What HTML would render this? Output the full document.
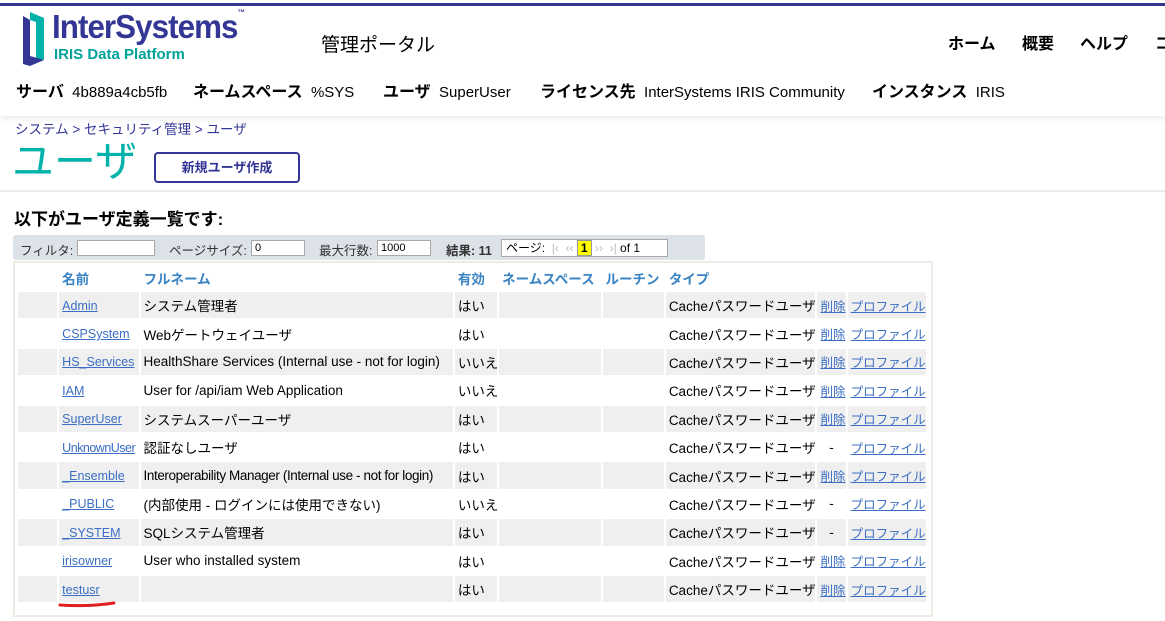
<!DOCTYPE html>
<html><head><meta charset="utf-8"><style>
*{margin:0;padding:0;box-sizing:border-box}
body{width:1165px;height:621px;overflow:hidden;background:#fff;font-family:"Liberation Sans","Noto Sans CJK JP",sans-serif;position:relative;color:#000}
.a{position:absolute;white-space:nowrap}
.b{font-weight:bold}
table{position:absolute;left:16px;top:264px;width:912px;border-collapse:separate;border-spacing:2px;table-layout:fixed;font-size:13.5px}
td,th{height:26.4px;padding:0 3px;background:#efefef;overflow:hidden;white-space:nowrap;text-align:left;vertical-align:middle}
tr.w td{background:#fff}
th{background:#fff;height:24px;color:#3b84c4;font-weight:bold;font-size:13.5px}
a{color:#3b6ec4;text-decoration:underline;font-size:12.5px}
input{position:absolute;height:16px;border:1px solid #aaa;background:#fff;font-size:11px;padding-left:3px;font-family:"Liberation Sans",sans-serif}
</style></head><body>
<div class="a" style="left:0;top:3px;width:1165px;height:3px;background:#333695"></div>
<div class="a" style="left:0;top:6px;width:1165px;height:110px;background:#fff;box-shadow:0 3px 6px rgba(0,0,0,0.08)"></div>
<svg class="a" style="left:22px;top:10px" width="26" height="58" viewBox="0 0 26 58"><polygon points="8,2 22,8 22,50 14,48 14,12 8,10" fill="#00b2a9"/><polygon points="1,6 8,10 8,46 22,50 8,56 1,54" fill="#333695"/></svg>
<div class="a b" style="left:52px;top:8px;font-size:33px;color:#333695;letter-spacing:-1px;transform:scaleX(0.95);transform-origin:left">InterSystems<span style="font-size:8px;vertical-align:top">™</span></div>
<div class="a b" style="left:54px;top:46px;font-size:15px;color:#00a29a">IRIS Data Platform</div>
<div class="a" style="left:321px;top:30px;font-size:19px">管理ポータル</div>
<div class="a b" style="left:948px;top:30px;font-size:16px">ホーム</div>
<div class="a b" style="left:1022px;top:30px;font-size:16px">概要</div>
<div class="a b" style="left:1080px;top:30px;font-size:16px">ヘルプ</div>
<div class="a b" style="left:1155px;top:30px;font-size:16px">コ</div>
<div class="a" style="left:16px;top:78px;font-size:15px"><b style="font-size:16px">サーバ</b>&nbsp; 4b889a4cb5fb</div>
<div class="a" style="left:193px;top:78px;font-size:15px"><b style="font-size:16px">ネームスペース</b>&nbsp; %SYS</div>
<div class="a" style="left:383px;top:78px;font-size:15px"><b style="font-size:16px">ユーザ</b>&nbsp; SuperUser</div>
<div class="a" style="left:540px;top:78px;font-size:15px"><b style="font-size:16px">ライセンス先</b>&nbsp; InterSystems IRIS Community</div>
<div class="a" style="left:872px;top:78px;font-size:15px"><b style="font-size:16px">インスタンス</b>&nbsp; IRIS</div>
<div class="a" style="left:15px;top:118px;font-size:13.5px;color:#333695">システム &gt; セキュリティ管理 &gt; ユーザ</div>
<div class="a" style="left:12px;top:137px;font-size:42px;color:#00b2a9;line-height:50px">ユーザ</div>
<div class="a b" style="left:154px;top:152px;width:146px;height:31px;border:2px solid #333695;border-radius:4px;font-size:13px;color:#333695;text-align:center;line-height:27px">新規ユーザ作成</div>
<div class="a" style="left:0;top:190px;width:1165px;height:2px;background:#ececec"></div>
<div class="a b" style="left:14px;top:205px;font-size:17px">以下がユーザ定義一覧です:</div>
<div class="a" style="left:13px;top:235px;width:692px;height:25px;background:#dde1e8;border-radius:3px"></div>
<div class="a" style="left:20px;top:240px;font-size:12.5px;color:#333">フィルタ:</div>
<input style="left:77px;top:240px;width:78px">
<div class="a" style="left:169px;top:240px;font-size:12.5px;color:#333">ページサイズ:</div>
<input style="left:251px;top:240px;width:54px" value="0">
<div class="a" style="left:319px;top:240px;font-size:12.5px;color:#333">最大行数:</div>
<input style="left:377px;top:240px;width:54px" value="1000">
<div class="a" style="left:446px;top:240px;font-size:12.5px;color:#333"><b>結果: 11</b></div>
<div class="a" style="left:501px;top:239px;width:167px;height:18px;background:#fff;border:1px solid #aaa;font-size:12px;line-height:16px;padding-left:4px">ページ: <span style="color:#bbb">&nbsp;|‹ &nbsp;‹‹ </span><span style="background:#ff0;border:1px solid #999;padding:0 3px;font-weight:bold">1</span><span style="color:#bbb"> ›› &nbsp;›|</span> of 1</div>
<div class="a" style="left:13px;top:261px;width:920px;height:356px;border:2px solid #ecece4;background:#fff"></div>
<table>
<colgroup><col style="width:39px"><col style="width:79px"><col style="width:311px"><col style="width:42px"><col style="width:101px"><col style="width:61px"><col style="width:149px"><col style="width:28px"><col style="width:78px"></colgroup>
<tr><th></th><th>名前</th><th>フルネーム</th><th>有効</th><th>ネームスペース</th><th>ルーチン</th><th>タイプ</th><th></th><th></th></tr>
<tr><td></td><td><a>Admin</a></td><td>システム管理者</td><td>はい</td><td></td><td></td><td>Cacheパスワードユーザ</td><td><a>削除</a></td><td><a>プロファイル</a></td></tr>
<tr class="w"><td></td><td><a>CSPSystem</a></td><td>Webゲートウェイユーザ</td><td>はい</td><td></td><td></td><td>Cacheパスワードユーザ</td><td><a>削除</a></td><td><a>プロファイル</a></td></tr>
<tr><td></td><td><a>HS_Services</a></td><td>HealthShare Services (Internal use - not for login)</td><td>いいえ</td><td></td><td></td><td>Cacheパスワードユーザ</td><td><a>削除</a></td><td><a>プロファイル</a></td></tr>
<tr class="w"><td></td><td><a>IAM</a></td><td>User for /api/iam Web Application</td><td>いいえ</td><td></td><td></td><td>Cacheパスワードユーザ</td><td><a>削除</a></td><td><a>プロファイル</a></td></tr>
<tr><td></td><td><a>SuperUser</a></td><td>システムスーパーユーザ</td><td>はい</td><td></td><td></td><td>Cacheパスワードユーザ</td><td><a>削除</a></td><td><a>プロファイル</a></td></tr>
<tr class="w"><td></td><td><a style="letter-spacing:-0.5px">UnknownUser</a></td><td>認証なしユーザ</td><td>はい</td><td></td><td></td><td>Cacheパスワードユーザ</td><td style="text-align:center">-</td><td><a>プロファイル</a></td></tr>
<tr><td></td><td><a>_Ensemble</a></td><td style="letter-spacing:-0.4px">Interoperability Manager (Internal use - not for login)</td><td>はい</td><td></td><td></td><td>Cacheパスワードユーザ</td><td><a>削除</a></td><td><a>プロファイル</a></td></tr>
<tr class="w"><td></td><td><a>_PUBLIC</a></td><td>(内部使用 - ログインには使用できない)</td><td>いいえ</td><td></td><td></td><td>Cacheパスワードユーザ</td><td style="text-align:center">-</td><td><a>プロファイル</a></td></tr>
<tr><td></td><td><a>_SYSTEM</a></td><td>SQLシステム管理者</td><td>はい</td><td></td><td></td><td>Cacheパスワードユーザ</td><td style="text-align:center">-</td><td><a>プロファイル</a></td></tr>
<tr class="w"><td></td><td><a>irisowner</a></td><td>User who installed system</td><td>はい</td><td></td><td></td><td>Cacheパスワードユーザ</td><td><a>削除</a></td><td><a>プロファイル</a></td></tr>
<tr><td></td><td><a>testusr</a></td><td></td><td>はい</td><td></td><td></td><td>Cacheパスワードユーザ</td><td><a>削除</a></td><td><a>プロファイル</a></td></tr>
</table>
<svg class="a" style="left:58px;top:600px" width="60" height="8"><path d="M2 5 Q30 7 56 3" stroke="#e02020" stroke-width="3" fill="none" stroke-linecap="round"/></svg>
</body></html>
